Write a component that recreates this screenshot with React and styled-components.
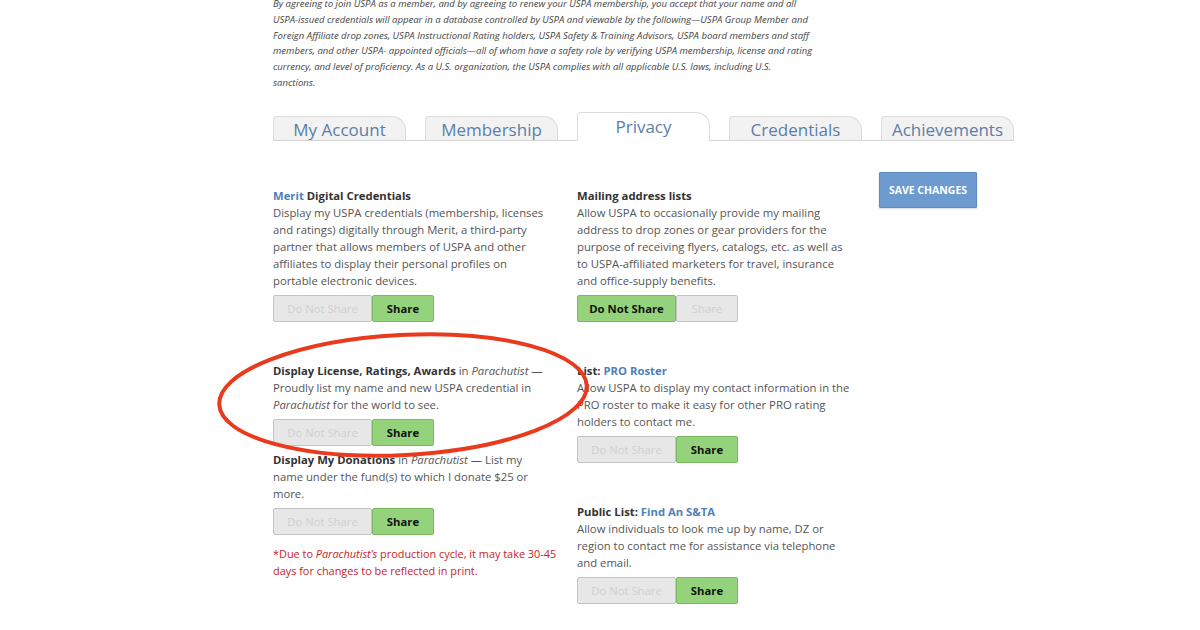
import styled, {createGlobalStyle} from "styled-components";

const GlobalStyle = createGlobalStyle`
  body {
    margin: 0;
    background: #fff;
    font-family: "Open Sans", "Liberation Sans", sans-serif;
  }
`;

const tabs = ["My Account", "Membership", "Privacy", "Credentials", "Achievements"];

const introLines = [
  "By agreeing to join USPA as a member, and by agreeing to renew your USPA membership, you accept that your name and all",
  "USPA-issued credentials will appear in a database controlled by USPA and viewable by the following—USPA Group Member and",
  "Foreign Affiliate drop zones, USPA Instructional Rating holders, USPA Safety & Training Advisors, USPA board members and staff",
  "members, and other USPA- appointed officials—all of whom have a safety role by verifying USPA membership, license and rating",
  "currency, and level of proficiency. As a U.S. organization, the USPA complies with all applicable U.S. laws, including U.S.",
  "sanctions."
];

function ShareToggle({value}) {
  return (
    <Toggle>
      <ToggleBtn wide active={value === "no"}>Do Not Share</ToggleBtn>
      <ToggleBtn active={value === "yes"}>Share</ToggleBtn>
    </Toggle>
  );
}

export default function App() {
  return (
    <Page>
      <GlobalStyle />
      <Intro>
        {introLines.map((line, i) => (
          <IntroLine key={i}>{line}</IntroLine>
        ))}
      </Intro>

      <TabBar>
        {tabs.map(t => (
          <Tab key={t} active={t === "Privacy"}>{t}</Tab>
        ))}
      </TabBar>

      <Content>
        <Column>
          <Section>
            <Title><Link>Merit</Link> Digital Credentials</Title>
            <Text>
              Display my USPA credentials (membership, licenses and ratings) digitally through Merit, a third-party
              partner that allows members of USPA and other affiliates to display their personal profiles on
              portable electronic devices.
            </Text>
            <ShareToggle value="yes" />
          </Section>
          <Group>
            <Section>
              <Text>
                <Strong>Display License, Ratings, Awards</Strong> in <i>Parachutist</i> — Proudly list my name and
                new USPA credential in <i>Parachutist</i> for the world to see.
              </Text>
              <ShareToggle value="yes" />
            </Section>
            <Section>
              <Text>
                <Strong>Display My Donations</Strong> in <i>Parachutist</i> — List my name under the fund(s) to which I
                donate $25 or more.
              </Text>
              <ShareToggle value="yes" />
              <Note>
                *Due to <i>Parachutist’s</i> production cycle, it may take <NoWrap>30-45</NoWrap> days for changes to be
                reflected in print.
              </Note>
            </Section>
          </Group>
        </Column>

        <Column>
          <Section>
            <Title>Mailing address lists</Title>
            <Text>
              Allow USPA to occasionally provide my mailing address to drop zones or gear providers for the purpose of
              receiving flyers, catalogs, etc. as well as to USPA-affiliated marketers for travel, insurance and
              office-supply benefits.
            </Text>
            <ShareToggle value="no" />
          </Section>
          <Section>
            <Title>List: <Link>PRO Roster</Link></Title>
            <Text>
              Allow USPA to display my contact information in the PRO roster to make it easy for other PRO rating
              holders to contact me.
            </Text>
            <ShareToggle value="yes" />
          </Section>
          <Section>
            <Title>Public List: <Link>Find An S&amp;TA</Link></Title>
            <Text>
              Allow individuals to look me up by name, DZ or region to contact me for assistance via telephone and
              email.
            </Text>
            <ShareToggle value="yes" />
          </Section>
        </Column>

        <SaveBtn>Save Changes</SaveBtn>
      </Content>

      <Circle width="380" height="130" viewBox="0 0 380 130">
        <ellipse cx="188" cy="66" rx="184" ry="60" transform="rotate(-3 188 66)" />
      </Circle>
    </Page>
  );
}

const Page = styled.div`
  position: relative;
  padding-left: 273px;
  margin-top: -4px;
  color: #555;
`;

const Intro = styled.div`
  font-size: 9.55px;
  line-height: 15.8px;
  font-style: italic;
  color: #444;
`;

const IntroLine = styled.div`
  white-space: nowrap;
`;

const TabBar = styled.div`
  width: 739px;
  margin-top: 21px;
  display: flex;
  align-items: flex-end;
  gap: 19px;
  border-bottom: 1px solid #d4d4d4;
`;

const Tab = styled.div`
  width: 133px;
  flex-shrink: 0;
  height: ${p => (p.active ? 29 : 25)}px;
  margin-bottom: -1px;
  box-sizing: border-box;
  display: flex;
  justify-content: center;
  align-items: center;
  padding-top: ${p => (p.active ? 1 : 2)}px;
  background: ${p => (p.active ? "#fff" : "#f2f2f2")};
  border: 1px solid #dcdcdc;
  border-bottom-color: ${p => (p.active ? "#fff" : "#d4d4d4")};
  border-radius: 4px 14px 0 0;
  font-size: 17px;
  color: #5a7eaa;
`;

const Content = styled.div`
  display: flex;
  align-items: flex-start;
  padding-top: 31px;
`;

const Column = styled.div`
  width: 274px;
  margin-right: 30px;
  margin-top: 15px;
  display: flex;
  flex-direction: column;
  gap: 40px;
`;

const Group = styled.div`
  display: flex;
  flex-direction: column;
  gap: 5px;
`;

const Section = styled.div`
  display: flex;
  flex-direction: column;
  align-items: flex-start;
  font-size: 11.3px;
  line-height: 17px;
`;

const Title = styled.div`
  font-weight: 700;
  color: #333;
`;

const Strong = styled.b`
  font-weight: 700;
  color: #333;
`;

const Link = styled.span`
  color: #4f80b8;
  font-weight: 700;
`;

const Text = styled.div``;

const Toggle = styled.div`
  margin-top: 6px;
  display: flex;
`;

const ToggleBtn = styled.div`
  width: ${p => (p.wide ? 99 : 62)}px;
  height: 27px;
  box-sizing: border-box;
  display: flex;
  justify-content: center;
  align-items: center;
  border-radius: 2px;
  font-size: 11.3px;
  background: ${p => (p.active ? "#94d37b" : "#e7e7e7")};
  border: 1px solid ${p => (p.active ? "#78bb5f" : "#c4c4c4")};
  color: ${p => (p.active ? "#111" : "#cfcfcf")};
  font-weight: ${p => (p.active ? 700 : 400)};
`;

const Note = styled.div`
  width: 290px;
  margin-top: 10px;
  color: #c8231f;
  font-size: 10.9px;
`;

const NoWrap = styled.span`
  white-space: nowrap;
`;

const SaveBtn = styled.button`
  width: 98px;
  height: 36px;
  margin-left: -2px;
  border: 1px solid #5d89bd;
  border-radius: 1px;
  background: #6d9bd0;
  color: #fff;
  font-family: "Open Sans", "Liberation Sans", sans-serif;
  font-weight: 700;
  font-size: 10.5px;
  text-transform: uppercase;
  box-shadow: 0 1px 2px rgba(0, 0, 0, 0.15);
`;

const Circle = styled.svg`
  position: absolute;
  left: 215px;
  top: 333px;
  overflow: visible;

  ellipse {
    fill: none;
    stroke: #ea3a1e;
    stroke-width: 4;
  }
`;
